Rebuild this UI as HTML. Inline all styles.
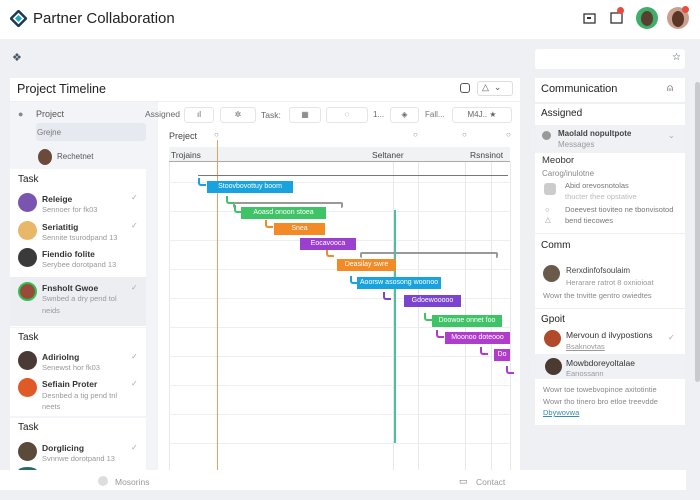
<!DOCTYPE html><html><head><style>
*{margin:0;padding:0;box-sizing:border-box}
body{width:700px;height:500px;background:#eef0f4;font-family:"Liberation Sans",sans-serif;position:relative;overflow:hidden;color:#222}
.a{position:absolute}
.t{position:absolute;white-space:nowrap}
.av{position:absolute;border-radius:50%}
.bar{position:absolute;height:12px;color:#fff;font-size:7px;line-height:12px;text-align:center;white-space:nowrap;overflow:hidden}
.el{position:absolute;width:8px;height:8px;border-left:2px solid;border-bottom:2px solid;border-bottom-left-radius:3px}
.n{font-size:8.5px;font-weight:bold;color:#333}
.s{font-size:7.5px;color:#999}
.ck{font-size:8px;color:#aaa}
.vl{position:absolute;width:1px;background:#e6e8ec;top:162px;height:308px}
.hl{position:absolute;height:1px;background:#eceef1;left:169px;width:341px}
.bx{position:absolute;background:#fff;border:1px solid #e3e5e9;border-radius:3px;height:16px;top:107px;font-size:8px;color:#666;text-align:center;line-height:14px}
</style></head><body>
<div class="a" style="left:0;top:0;width:700px;height:39px;background:#fff"></div>
<svg class="a" style="left:10px;top:10px" width="17" height="17" viewBox="0 0 17 17"><path d="M8.5 1L16 8.5 8.5 16 1 8.5Z" fill="none" stroke="#1e3a55" stroke-width="2.5"/><path d="M8.5 5L12 8.5 8.5 12 5 8.5Z" fill="#1aa7c9"/></svg>
<div class="t" style="left:33px;top:10px;font-size:15px;color:#222">Partner Collaboration</div>
<svg class="a" style="left:583px;top:11px" width="14" height="14"><rect x="1" y="3" width="11" height="9" fill="none" stroke="#333" stroke-width="1.3"/><rect x="4" y="6" width="4" height="2" fill="#333"/></svg>
<svg class="a" style="left:610px;top:11px" width="14" height="14"><rect x="1" y="2" width="11" height="10" fill="none" stroke="#333" stroke-width="1.3"/></svg>
<div class="av" style="left:617px;top:7px;width:7px;height:7px;background:#e74c3c"></div>
<div class="av" style="left:636px;top:7px;width:22px;height:22px;background:#3fae6a"></div>
<div class="av" style="left:641px;top:11px;width:12px;height:15px;background:#5a3e30"></div>
<div class="av" style="left:667px;top:7px;width:22px;height:22px;background:#c9a090"></div>
<div class="av" style="left:672px;top:11px;width:12px;height:16px;background:#5b3526"></div>
<div class="av" style="left:682px;top:6px;width:7px;height:7px;background:#e74c3c"></div>
<div class="t" style="left:12px;top:51px;font-size:11px;color:#456">❖</div>
<div class="a" style="left:535px;top:49px;width:150px;height:20px;background:#fff;border-radius:3px"></div>
<div class="t" style="left:672px;top:52px;font-size:10px;color:#444">☆</div>
<div class="a" style="left:10px;top:78px;width:510px;height:392px;background:#fff"></div>
<div class="a" style="left:10px;top:101px;width:510px;height:1px;background:#eceef1"></div>
<div class="t" style="left:17px;top:82px;font-size:12.5px;color:#222">Project Timeline</div>
<div class="a" style="left:460px;top:83px;width:10px;height:10px;border:1.3px solid #555;border-radius:3px"></div>
<div class="a" style="left:477px;top:81px;width:36px;height:15px;border:1px solid #ddd;border-radius:3px;font-size:9px;color:#555;padding-left:4px">△ &nbsp;⌄</div>
<div class="a" style="left:10px;top:102px;width:148px;height:368px;background:#f3f4f7"></div>
<div class="t" style="left:18px;top:109px;font-size:9px;color:#888">●</div>
<div class="t" style="left:36px;top:109px;font-size:9px;color:#555">Project</div>
<div class="a" style="left:36px;top:123px;width:110px;height:18px;background:#e6e9ef;border-radius:3px"></div>
<div class="t" style="left:37px;top:128px;font-size:8px;color:#777">Grejne</div>
<div class="av" style="left:38px;top:149px;width:14px;height:16px;background:#6b4a3a"></div>
<div class="t" style="left:57px;top:152px;font-size:8px;color:#555">Rechetnet</div>
<div class="t" style="left:145px;top:109px;font-size:8.5px;color:#666">Assigned</div>
<div class="bx" style="left:184px;width:30px">ıl</div>
<div class="bx" style="left:220px;width:36px">✲</div>
<div class="t" style="left:261px;top:110px;font-size:8.5px;color:#666">Task:</div>
<div class="bx" style="left:289px;width:32px">▦</div>
<div class="bx" style="left:326px;width:42px">◌</div>
<div class="t" style="left:373px;top:110px;font-size:8px;color:#666">1...</div>
<div class="bx" style="left:390px;width:29px">◈</div>
<div class="t" style="left:425px;top:110px;font-size:8px;color:#777">Fall...</div>
<div class="bx" style="left:452px;width:60px">M4J.. ★</div>
<div class="t" style="left:169px;top:131px;font-size:9px;color:#444">Preject</div>
<div class="t" style="left:214px;top:130px;font-size:8px;color:#888">○</div>
<div class="t" style="left:413px;top:130px;font-size:8px;color:#888">○</div>
<div class="t" style="left:462px;top:130px;font-size:8px;color:#888">○</div>
<div class="t" style="left:506px;top:130px;font-size:8px;color:#888">○</div>
<div class="a" style="left:169px;top:147px;width:341px;height:15px;background:#f1f2f4;border-bottom:1px solid #aaa"></div>
<div class="t" style="left:171px;top:150px;font-size:8.5px;color:#444">Trojains</div>
<div class="t" style="left:372px;top:150px;font-size:8.5px;color:#444">Seltaner</div>
<div class="t" style="left:470px;top:150px;font-size:8.5px;color:#444">Rsnsinot</div>
<div class="vl" style="left:169px"></div><div class="vl" style="left:393px"></div><div class="vl" style="left:418px"></div><div class="vl" style="left:465px"></div><div class="vl" style="left:491px"></div><div class="vl" style="left:510px"></div>
<div class="hl" style="top:182px"></div><div class="hl" style="top:211px"></div><div class="hl" style="top:240px"></div><div class="hl" style="top:269px"></div><div class="hl" style="top:298px"></div><div class="hl" style="top:327px"></div><div class="hl" style="top:356px"></div><div class="hl" style="top:385px"></div><div class="hl" style="top:414px"></div><div class="hl" style="top:443px"></div>
<div class="a" style="left:217px;top:140px;width:1px;height:330px;background:#e8a060"></div>
<div class="a" style="left:394px;top:210px;width:1.5px;height:233px;background:#4cc09a"></div>
<div class="a" style="left:198px;top:175px;width:310px;height:1px;background:#777"></div>
<div class="a" style="left:233px;top:202px;width:110px;height:6px;border:2px solid #999;border-bottom:none;border-radius:2px"></div>
<div class="a" style="left:360px;top:252px;width:138px;height:6px;border:2px solid #999;border-bottom:none;border-radius:2px"></div>
<div class="el" style="left:198px;top:178px;color:#19a3de"></div>
<div class="el" style="left:226px;top:196px;color:#3ec366"></div>
<div class="el" style="left:234px;top:205px;color:#3ec366"></div>
<div class="el" style="left:265px;top:220px;color:#f28a26"></div>
<div class="el" style="left:326px;top:249px;color:#f28a26"></div>
<div class="el" style="left:350px;top:276px;color:#19a3de"></div>
<div class="el" style="left:383px;top:292px;color:#7b44d0"></div>
<div class="el" style="left:424px;top:313px;color:#3ec366"></div>
<div class="el" style="left:436px;top:330px;color:#b03ccc"></div>
<div class="el" style="left:480px;top:347px;color:#b03ccc"></div>
<div class="el" style="left:506px;top:366px;color:#b03ccc"></div>
<div class="bar" style="left:207px;top:181px;width:86px;background:#19a3de">Stoovbovottuy boom</div>
<div class="bar" style="left:241px;top:207px;width:85px;background:#3ec366">Aoasd onoon stoea</div>
<div class="bar" style="left:274px;top:223px;width:51px;background:#f28a26">Snea</div>
<div class="bar" style="left:300px;top:238px;width:56px;background:#9a3fd0">Eocavooca</div>
<div class="bar" style="left:337px;top:259px;width:59px;background:#f28a26">Deasilay swre</div>
<div class="bar" style="left:357px;top:277px;width:84px;background:#19a3de">Aoorsw asosong woonoo</div>
<div class="bar" style="left:404px;top:295px;width:57px;background:#7b44d0">Gdoewooooo</div>
<div class="bar" style="left:432px;top:315px;width:70px;background:#3ec366">Doowoe onnet foo</div>
<div class="bar" style="left:445px;top:332px;width:65px;background:#b03ccc">Moonoo doteooo</div>
<div class="bar" style="left:494px;top:349px;width:16px;background:#b03ccc">Do</div>
<div class="a" style="left:10px;top:169px;width:136px;height:158px;background:#fff"></div>
<div class="a" style="left:10px;top:277px;width:136px;height:49px;background:#eceef2"></div>
<div class="a" style="left:10px;top:328px;width:136px;height:88px;background:#fff"></div>
<div class="a" style="left:10px;top:418px;width:136px;height:52px;background:#fff"></div>
<div class="t" style="left:18px;top:174px;font-size:10px">Task</div>
<div class="t" style="left:18px;top:332px;font-size:10px">Task</div>
<div class="t" style="left:18px;top:422px;font-size:10px">Task</div>
<div class="av" style="left:18px;top:193px;width:19px;height:19px;background:#7a55b0"></div>
<div class="t n" style="left:42px;top:194px">Releige</div><div class="t s" style="left:42px;top:205px">Sennoer for fk03</div><div class="t ck" style="left:131px;top:193px">✓</div>
<div class="av" style="left:18px;top:221px;width:19px;height:19px;background:#e8b868"></div>
<div class="t n" style="left:42px;top:222px">Seriatitig</div><div class="t s" style="left:42px;top:233px">Sennite tsurodpand 13</div><div class="t ck" style="left:131px;top:221px">✓</div>
<div class="av" style="left:18px;top:248px;width:19px;height:19px;background:#3a3a3a"></div>
<div class="t n" style="left:42px;top:249px">Fiendio folite</div><div class="t s" style="left:42px;top:260px">Serybee dorotpand 13</div>
<div class="av" style="left:18px;top:282px;width:19px;height:19px;background:#9a4a3a;border:2px solid #2fc150"></div>
<div class="t n" style="left:42px;top:283px">Fnsholt Gwoe</div><div class="t s" style="left:42px;top:294px">Swnbed a dry pend tol</div><div class="t s" style="left:42px;top:306px">neids</div><div class="t ck" style="left:131px;top:283px">✓</div>
<div class="av" style="left:18px;top:351px;width:19px;height:19px;background:#4a3a35"></div>
<div class="t n" style="left:42px;top:352px">Adiriolng</div><div class="t s" style="left:42px;top:363px">Senewst hor fk03</div><div class="t ck" style="left:131px;top:352px">✓</div>
<div class="av" style="left:18px;top:378px;width:19px;height:19px;background:#e05a28"></div>
<div class="t n" style="left:42px;top:379px">Sefiain Proter</div><div class="t s" style="left:42px;top:391px">Desnbed a tig pend tnl</div><div class="t s" style="left:42px;top:402px">neets</div><div class="t ck" style="left:131px;top:379px">✓</div>
<div class="av" style="left:18px;top:442px;width:19px;height:19px;background:#5a4a3a"></div>
<div class="t n" style="left:42px;top:443px">Dorglicing</div><div class="t s" style="left:42px;top:454px">Svnnwe dorotpand 13</div><div class="t ck" style="left:131px;top:443px">✓</div>
<div class="av" style="left:18px;top:467px;width:19px;height:8px;background:#2a6a6a"></div>
<div class="a" style="left:0;top:470px;width:686px;height:20px;background:#fff"></div>
<div class="av" style="left:98px;top:476px;width:10px;height:10px;background:#ddd"></div>
<div class="t" style="left:115px;top:477px;font-size:8.5px;color:#999">Mosorins</div>
<div class="t" style="left:459px;top:476px;font-size:9px;color:#777">▭</div>
<div class="t" style="left:476px;top:477px;font-size:8.5px;color:#999">Contact</div>
<div class="a" style="left:535px;top:78px;width:150px;height:24px;background:#fff"></div>
<div class="t" style="left:541px;top:83px;font-size:11px;color:#222">Communication</div>
<div class="t" style="left:667px;top:83px;font-size:10px;color:#555">⍝</div>
<div class="a" style="left:535px;top:104px;width:150px;height:21px;background:#fff"></div>
<div class="t" style="left:541px;top:108px;font-size:10px;color:#222">Assigned</div>
<div class="a" style="left:535px;top:126px;width:150px;height:27px;background:#f0f1f4"></div>
<div class="av" style="left:542px;top:131px;width:9px;height:9px;background:#999"></div>
<div class="t" style="left:558px;top:129px;font-size:8px;font-weight:bold;color:#444">Maolald nopultpote</div>
<div class="t" style="left:558px;top:140px;font-size:8px;color:#999">Messages</div>
<div class="t" style="left:668px;top:131px;font-size:8px;color:#aaa">⌄</div>
<div class="a" style="left:535px;top:153px;width:150px;height:272px;background:#fff"></div>
<div class="t" style="left:542px;top:155px;font-size:9.5px;color:#333">Meobor</div>
<div class="t" style="left:542px;top:169px;font-size:8px;color:#888">Carog/inulotne</div>
<div class="a" style="left:544px;top:183px;width:12px;height:12px;background:#ccc;border-radius:3px"></div>
<div class="t s" style="left:565px;top:181px;color:#777">Abid orevosnotolas</div><div class="t s" style="left:565px;top:192px;color:#bbb">thucter thee opstative</div>
<div class="t s" style="left:545px;top:205px">○</div><div class="t s" style="left:545px;top:215px">△</div>
<div class="t s" style="left:565px;top:205px;color:#777">Doeevest tioviteo ne tbonvisotod</div><div class="t s" style="left:565px;top:216px;color:#777">bend tiecowes</div>
<div class="a" style="left:535px;top:233px;width:150px;height:1px;background:#eee"></div>
<div class="t" style="left:541px;top:240px;font-size:10px;color:#222">Comm</div>
<div class="av" style="left:543px;top:265px;width:17px;height:17px;background:#6a5a4a"></div>
<div class="t" style="left:566px;top:266px;font-size:8px;color:#444">Rerxdinfofsoulaim</div>
<div class="t s" style="left:566px;top:278px">Herarare ratrot 8 oxnioioat</div>
<div class="t s" style="left:543px;top:291px;color:#888">Wowr the tnvitte gentro owiedtes</div>
<div class="a" style="left:535px;top:308px;width:150px;height:1px;background:#eee"></div>
<div class="t" style="left:541px;top:314px;font-size:10px;color:#222">Gpoit</div>
<div class="av" style="left:544px;top:330px;width:17px;height:17px;background:#b04a2a"></div>
<div class="t" style="left:566px;top:330px;font-size:8.5px;color:#333">Mervoun d ilvypostions</div>
<div class="t s" style="left:566px;top:342px;text-decoration:underline">Bsaknovtas</div>
<div class="t ck" style="left:668px;top:333px">✓</div>
<div class="a" style="left:535px;top:354px;width:150px;height:25px;background:#f0f1f4"></div>
<div class="av" style="left:545px;top:358px;width:17px;height:17px;background:#4a3a30"></div>
<div class="t" style="left:566px;top:358px;font-size:8.5px;color:#333">Mowbdoreyoltalae</div>
<div class="t s" style="left:566px;top:369px">Eanossann</div>
<div class="t s" style="left:543px;top:385px;color:#888">Wowr toe towebvopinoe axitotintie</div>
<div class="t s" style="left:543px;top:397px;color:#888">Wowr tho tinero bro etloe treevdde</div>
<div class="t s" style="left:543px;top:408px;color:#3a8ab0;text-decoration:underline">Dbywovwa</div>
<div class="a" style="left:695px;top:82px;width:5px;height:300px;background:#c8cacd;border-radius:3px"></div>
</body></html>
